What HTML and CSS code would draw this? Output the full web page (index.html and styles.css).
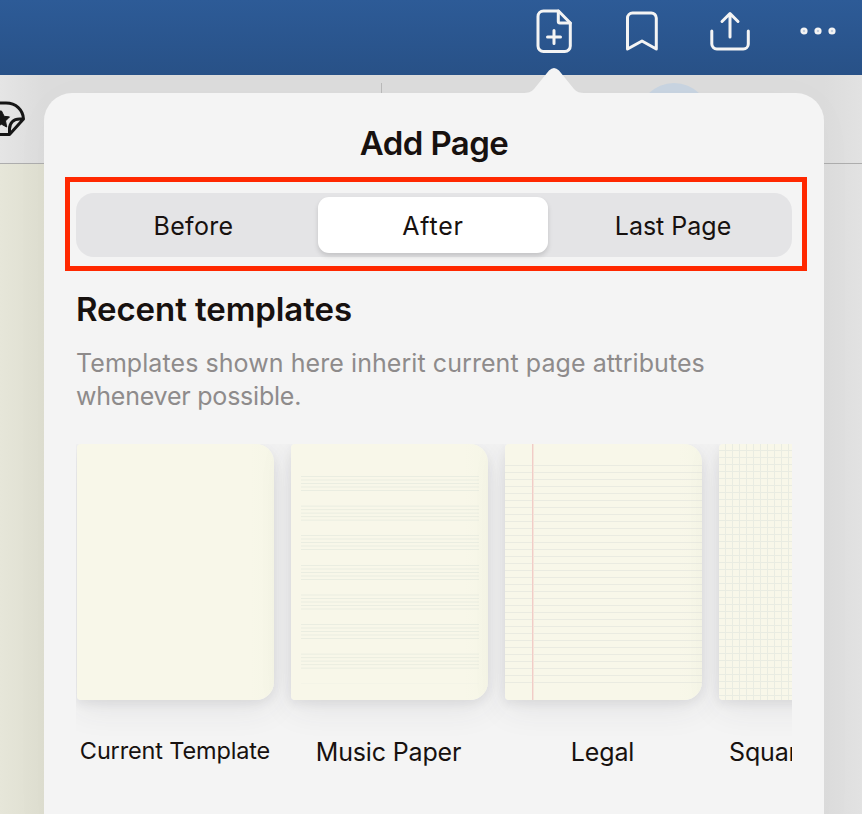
FILE: index.html
```html
<!DOCTYPE html>
<html lang="en">
<head>
<meta charset="utf-8">
<title>Add Page</title>
<link rel="stylesheet" href="styles.css">
</head>
<body>
<div class="app">
  <header class="navbar">
    <svg class="icon" viewBox="0 0 48 48"><path d="M14.500 5h15L41.300 17v23a5.500 5.500 0 0 1-5.500 5.500H14.500A5.500 5.500 0 0 1 9 40V10.500A5.500 5.500 0 0 1 14.500 5"/><path d="M29.300 5v10.500a1.500 1.500 0 0 0 1.500 1.500h10.500M25 24.500v13M18.500 31h13"/></svg>
    <svg class="icon" viewBox="0 0 48 48"><path d="M10.500 43V12a5 5 0 0 1 5-5h18.500A5 5 0 0 1 39.300 12v31L25 35z"/></svg>
    <svg class="icon" viewBox="0 0 48 48"><path d="M6.800 25v13a5 5 0 0 0 5 5h26.500a5 5 0 0 0 5-5V25M25 31V7.500M17 15.500l8-8 8 8"/></svg>
    <svg class="icon" viewBox="0 0 48 48"><g class="dots"><circle cx="11" cy="25" r="2.400"/><circle cx="25" cy="25" r="2.400"/><circle cx="39" cy="25" r="2.400"/></g></svg>
  </header>
  <div class="toolbar">
    <svg class="sticker" viewBox="0 0 26 40"><path d="M-8 3H6C16 3 23 10 23.500 19L9.500 34.500H-8M9.500 34.500V29c0-6 4-10 10-10h4"/><path class="star" d="M1.500 11l2.600 5.300 5.400.6-4 4 1.200 6.100-5.200-2.800-5 2.800V11z"/></svg>
    <span class="divider"></span>
    <span class="pen-dot"></span>
  </div>
  <main class="canvas"><div class="sheet"></div></main>

  <section class="popover">
    <svg class="arrow" viewBox="0 0 64 26"><path d="M0 26C7 26 9 25 12 22L27 3.500q5-5 10 0L52 22c3 3 5 4 12 4z"/></svg>
    <h1 class="title">Add Page</h1>
    <div class="segments">
      <button class="seg before">Before</button>
      <button class="seg active">After</button>
      <button class="seg last">Last Page</button>
      <div class="highlight"></div>
    </div>
    <h2 class="heading">Recent templates</h2>
    <p class="note">Templates shown here inherit current page attributes<br><span class="note-end">whenever possible.</span></p>
    <div class="templates">
      <div class="template"><div class="paper"></div><div class="label small">Current Template</div></div>
      <div class="template">
        <div class="paper">
          <svg class="ruling" viewBox="0 0 197 256">
            <defs><path id="staff" d="M10 .5H188M10 4H188M10 7.500H188M10 11H188M10 14.500H188"/></defs>
            <use href="#staff" y="32"/><use href="#staff" y="61.600"/><use href="#staff" y="91"/><use href="#staff" y="121"/><use href="#staff" y="150.500"/><use href="#staff" y="180"/><use href="#staff" y="209.600"/>
            <path class="faint" d="M10 239.500H188"/>
          </svg>
        </div>
        <div class="label">Music Paper</div>
      </div>
      <div class="template"><div class="paper legal"><div class="lines"></div><div class="margin-line"></div></div><div class="label">Legal</div></div>
      <div class="template"><div class="paper"><div class="grid"></div></div><div class="label square">Squared</div></div>
    </div>
  </section>
</div>
</body>
</html>
```
FILE: styles.css
```css
* { box-sizing: border-box; }
body { margin: 0; font-family: Inter, "Liberation Sans", sans-serif; color: #17110f; }
.app { position: relative; width: 862px; height: 814px; overflow: hidden; background: #dfdfdf; display: flex; flex-direction: column; }

.navbar { height: 75px; background: linear-gradient(#2d5b97, #285187); display: flex; justify-content: flex-end; gap: 40px; padding: 6px 21px 0 0; }
.icon { width: 48px; height: 48px; fill: none; stroke: #f4f4f4; stroke-width: 3; stroke-linecap: round; stroke-linejoin: round; }
.dots { stroke: #f4f4f4; stroke-width: 2.4; fill: #c3cfdf; }

.toolbar { height: 89px; flex: none; display: flex; background: linear-gradient(90deg, #e5e5e5, #dcdcdc 44px, #dcdcdc 824px, #e2e2e2); border-bottom: 1px solid #adadad; }
.sticker { width: 26px; height: 40px; margin-top: 25px; fill: none; stroke: #161616; stroke-width: 3; stroke-linejoin: round; }
.sticker .star { fill: #161616; stroke: #161616; stroke-width: 1; }
.divider { width: 1px; height: 40px; margin: 8px 0 0 355px; background: #bababa; }
.pen-dot { width: 72px; height: 72px; margin: 8px 0 0 256px; border-radius: 50%; background: #c8d4e1; }

.canvas { flex: 1; background: linear-gradient(90deg, #dcdcdc 824px, #e2e2e2); }
.sheet { width: 60px; height: 100%; background: linear-gradient(90deg, #e6e6d9, #deded0 44px); }

.popover { position: absolute; left: 44px; top: 93px; width: 780px; height: 760px; padding: 30px 32px 0; background: #f4f4f4; border-radius: 28px; box-shadow: 0 4px 50px rgba(0, 0, 0, .02); }
.arrow { position: absolute; left: 478px; top: -26px; width: 64px; height: 26px; fill: #f4f4f4; }

h1, h2, p { margin: 0; }
.title { height: 40px; line-height: 41px; font-size: 33px; font-weight: 600; letter-spacing: -.6px; text-align: center; }
.segments { position: relative; display: flex; justify-content: space-between; height: 64px; margin-top: 30px; padding: 4px; border-radius: 18px; background: #e4e4e6; }
.seg { width: 230px; padding: 0; border: 0; border-radius: 11px; background: none; font: 400 25px/59px Inter, sans-serif; color: inherit; text-align: center; }
.seg.before { padding-right: 3px; letter-spacing: .3px; }
.seg.active { position: relative; left: -1px; letter-spacing: .8px; background: #fff; box-shadow: 0 3px 5px rgba(0, 0, 0, .14); }
.highlight { position: absolute; left: -11px; top: -16px; width: 742px; height: 94px; border: 5px solid #ff2800; }

.heading { height: 40px; margin-top: 32px; line-height: 41px; font-size: 33px; font-weight: 600; letter-spacing: -.08px; white-space: nowrap; }
.note { height: 66px; margin-top: 18px; line-height: 33px; font-size: 25px; letter-spacing: .07px; color: #8e8b8b; white-space: nowrap; }
.note-end { letter-spacing: -.22px; }

.templates { display: flex; gap: 17px; height: 350px; margin-top: 31px; padding-left: 1px; overflow: hidden; }
.template { flex: none; width: 197px; }
.paper { position: relative; height: 256px; overflow: hidden; border-radius: 4px 18px 18px 4px; background: linear-gradient(90deg, #f8f7e9 88%, #f6f6e7); box-shadow: 0 4px 10px rgba(50, 50, 70, .08), 0 8px 34px rgba(50, 50, 70, .09); }
.ruling { display: block; width: 197px; height: 256px; fill: none; stroke: #eaede1; }
.ruling .faint { stroke: #f4f4e7; }
.lines { height: 224px; margin-top: 21px; background: repeating-linear-gradient(#eaebe1 0 1px, transparent 1px 7px); }
.legal { display: flow-root; }
.margin-line { position: absolute; left: 27px; top: 0; width: 2px; height: 256px; background: linear-gradient(90deg, #f1ccc7 1px, #f5e4d9 1px); }
.grid { height: 256px; background: repeating-linear-gradient(transparent 0 6px, #e9ece2 6px 7px), repeating-linear-gradient(90deg, transparent 0 6px, #e9ece2 6px 7px); }
.label { height: 36px; margin-top: 34px; padding-right: 2px; line-height: 37px; font-size: 25px; letter-spacing: -.15px; text-align: center; white-space: nowrap; }
.label.small { margin-top: 33px; padding-right: 1px; line-height: 36px; font-size: 23.500px; }
.label.square { text-align: left; padding-left: 10px; }
```
